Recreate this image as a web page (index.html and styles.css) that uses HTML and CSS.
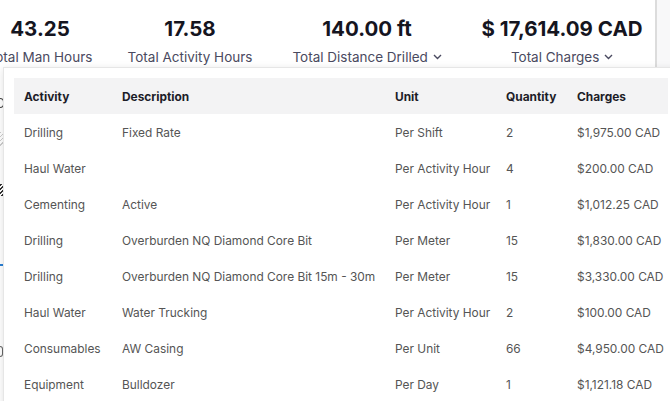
FILE: index.html
```html
<!DOCTYPE html>
<html lang="en">
<head>
    <meta charset="UTF-8">
    <meta name="viewport" content="width=device-width, initial-scale=1.0">
    <title>Activity Charges</title>
    <link rel="stylesheet" href="styles.css">
</head>
<body>
    <div class="page">
        <div class="main">
            <!-- Summary figures -->
            <div class="stats">
                <div class="stat stat-man">
                    <div class="value">43.25</div>
                    <div class="label">Total Man Hours</div>
                </div>
                <div class="stat stat-activity">
                    <div class="value">17.58</div>
                    <div class="label">Total Activity Hours</div>
                </div>
                <div class="stat stat-distance">
                    <div class="value">140.00 ft</div>
                    <div class="label">Total Distance Drilled
                        <svg class="chev" width="9" height="6" viewBox="0 0 9 6"><path d="M1 1l3.5 3.5L8 1" fill="none" stroke="#4a4a60" stroke-width="1.4"/></svg>
                    </div>
                </div>
                <div class="stat stat-charges">
                    <div class="value">$ 17,614.09 CAD</div>
                    <div class="label">Total Charges
                        <svg class="chev" width="9" height="6" viewBox="0 0 9 6"><path d="M1 1l3.5 3.5L8 1" fill="none" stroke="#4a4a60" stroke-width="1.4"/></svg>
                    </div>
                </div>
            </div>

            <!-- Bits of the page behind the dropdown -->
            <div class="behind">
                <span class="peek peek-o"></span>
                <span class="peek peek-hatch"></span>
                <span class="peek peek-line"></span>
                <span class="peek peek-t"></span>
                <span class="peek peek-c"></span>
            </div>
        </div>
        <div class="side"></div>

        <!-- Charges breakdown dropdown -->
        <div class="dropdown">
            <table class="charges">
                <colgroup>
                    <col style="width: 98px">
                    <col style="width: 273px">
                    <col style="width: 111px">
                    <col style="width: 71px">
                    <col style="width: 101px">
                </colgroup>
                <thead>
                    <tr>
                        <th>Activity</th>
                        <th>Description</th>
                        <th>Unit</th>
                        <th>Quantity</th>
                        <th>Charges</th>
                    </tr>
                </thead>
                <tbody>
                    <tr><td>Drilling</td><td>Fixed Rate</td><td>Per Shift</td><td>2</td><td>$1,975.00 CAD</td></tr>
                    <tr><td>Haul Water</td><td></td><td>Per Activity Hour</td><td>4</td><td>$200.00 CAD</td></tr>
                    <tr><td>Cementing</td><td>Active</td><td>Per Activity Hour</td><td>1</td><td>$1,012.25 CAD</td></tr>
                    <tr><td>Drilling</td><td>Overburden NQ Diamond Core Bit</td><td>Per Meter</td><td>15</td><td>$1,830.00 CAD</td></tr>
                    <tr><td>Drilling</td><td>Overburden NQ Diamond Core Bit 15m - 30m</td><td>Per Meter</td><td>15</td><td>$3,330.00 CAD</td></tr>
                    <tr><td>Haul Water</td><td>Water Trucking</td><td>Per Activity Hour</td><td>2</td><td>$100.00 CAD</td></tr>
                    <tr><td>Consumables</td><td>AW Casing</td><td>Per Unit</td><td>66</td><td>$4,950.00 CAD</td></tr>
                    <tr><td>Equipment</td><td>Bulldozer</td><td>Per Day</td><td>1</td><td>$1,121.18 CAD</td></tr>
                </tbody>
            </table>
        </div>
    </div>
</body>
</html>
```

FILE: styles.css
```css
html, body {
    margin: 0;
    height: 100%;
    overflow: hidden;
}
body {
    font-family: Inter, "Noto Sans", sans-serif;
    background: #fff;
    color: #333;
}
.page {
    position: relative;
    display: flex;
    width: 670px;
    height: 401px;
    overflow: hidden;
}
.main {
    width: 655px;
    flex-shrink: 0;
    border-right: 2px solid #dcdcdc;
    background: #fff;
}
.side {
    flex: 1;
    background: #f8f8f9;
}
.stats {
    display: flex;
    height: 68px;
    padding-top: 16px;
    box-sizing: border-box;
}
.stat {
    text-align: center;
    white-space: nowrap;
}
.stat-man {
    width: 150px;
    margin-left: -35px;
}
.stat-activity {
    width: 150px;
}
.stat-distance {
    width: 204px;
}
.stat-charges {
    width: 186px;
}
.value {
    font-size: 20.5px;
    font-weight: 700;
    color: #15151f;
    line-height: 26px;
}
.label {
    margin-top: 6px;
    font-size: 13.5px;
    color: #4a4a60;
    line-height: 18px;
}
.chev {
    vertical-align: 2px;
    margin-left: 1px;
}
.behind {
    position: relative;
    height: 333px;
}
/* slivers of the underlying page, only a few pixels show */
.peek {
    position: absolute;
    left: 0;
}
.peek-o { top: 30px; width: 3px; height: 8px; border: 1.5px solid #444; border-left: none; border-radius: 0 5px 5px 0; }
.peek-hatch { top: 64px; width: 4px; height: 14px; background: repeating-linear-gradient(135deg, #ccc 0 1px, transparent 1px 3px); }
.peek-line { top: 116px; width: 4px; height: 12px; background: repeating-linear-gradient(135deg, #333 0 1.5px, transparent 1.5px 3px); }
.peek-t { top: 196px; width: 3px; height: 10px; border-top: 2px solid #2a7fd4; border-right: 2px solid #2a7fd4; }
.peek-c { top: 278px; width: 2px; height: 9px; border: 1.5px solid #666; border-left: none; border-radius: 0 4px 4px 0; }
.dropdown {
    position: absolute;
    top: 67px;
    left: 3px;
    width: 676px;
    height: 340px;
    padding: 10px 10px 0 10px;
    box-sizing: border-box;
    background: #fff;
    border: 1px solid #e6e6e6;
    box-shadow: 0 2px 8px rgba(0, 0, 0, 0.12);
}
.charges {
    table-layout: fixed;
    width: 654px;
    border-collapse: collapse;
    font-size: 11.9px;
}
.charges th {
    height: 36px;
    padding: 0 10px;
    background: #f3f3f4;
    color: #1d1d28;
    font-weight: 700;
    text-align: left;
}
.charges td {
    height: 36px;
    padding: 0 10px;
    color: #555;
    white-space: nowrap;
}
```
